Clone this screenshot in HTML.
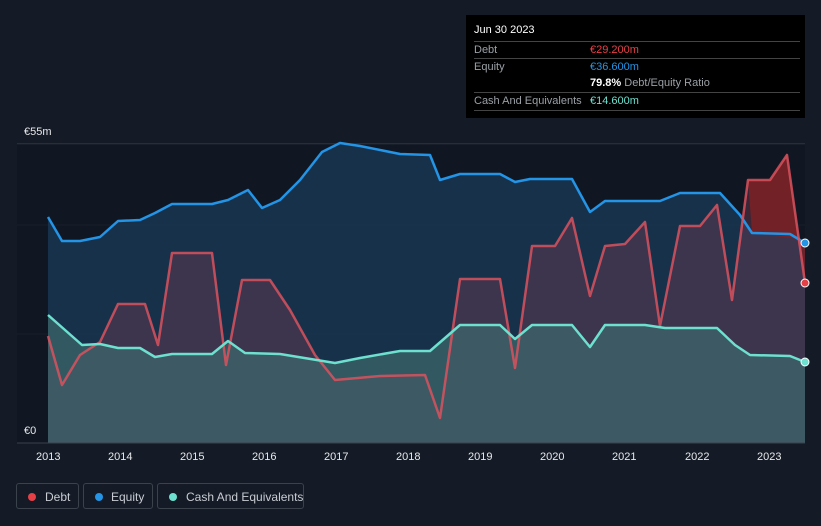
<!DOCTYPE html>
<html><head><style>
body{margin:0;width:821px;height:526px;background:#151b26;font-family:"Liberation Sans",sans-serif;overflow:hidden;position:relative}
.tip{position:absolute;left:466px;top:15px;width:339px;height:103px;background:#000;color:#fff;font-size:11px}
.row{position:absolute;left:8px;width:326px;border-top:1px solid #444;height:17px;line-height:17px;color:#9aa0a6;white-space:nowrap}
.row span{position:absolute;left:116px}
.leg{position:absolute;top:483px;height:26px;border:1px solid #3c424c;border-radius:3px;color:#c8ccd2;font-size:12px;line-height:26px;box-sizing:border-box;white-space:nowrap}
.leg i{position:absolute;left:11px;top:9px;width:8px;height:8px;border-radius:50%}
.ax{position:absolute;top:451px;color:#e6e8ea;font-size:11px}
</style></head><body>
<svg width="821" height="526" style="position:absolute;left:0;top:0">
<line x1="17" y1="144" x2="805" y2="144" stroke="#3a414c"/>
<line x1="17" y1="225" x2="805" y2="225" stroke="#262d38"/>
<line x1="17" y1="334" x2="805" y2="334" stroke="#262d38"/>
<rect x="17" y="144" width="788" height="299" fill="#0f1520" opacity="0.6"/>
<path d="M48,217L62,241L80,241L100,237L118,221L140,220L155,213L172,204L212,204L228,200L238,195L248,190L262,208L280,200L300,180L322,152L340,143L360,146L400,154L430,155L440,180L460,174L500,174L515,182L530,179L572,179L590,212L605,201L660,201L680,193L720,193L740,215L752,233L790,234L805,243L805,443L48,443Z" fill="#1a3450" opacity="0.9"/>
<path d="M48,336L62,385L80,355L100,342L118,304L145,304L158,345L172,253L212,253L226,365L242,280L270,280L290,310L315,355L335,380L380,376L425,375L440,418L460,279L500,279L515,368L532,246L555,246L572,218L590,296L605,246L625,244L645,222L660,326L680,226L700,226L717,205L732,300L748,180L770,180L787,155L805,283L805,443L48,443Z" fill="#6a3a52" opacity="0.45"/>
<path d="M748,180L770,180L787,155L805,283L805,240L752,233Z" fill="#8a2020" opacity="0.7"/>
<path d="M48,315L82,345L100,344L118,348L140,348L155,357L172,354L212,354L228,341L245,353L280,354L335,363L360,358L400,351L430,351L460,325L500,325L515,339L532,325L572,325L590,347L605,325L645,325L665,328L717,328L735,345L750,355L790,356L805,362L805,443L48,443Z" fill="#3d6a6c" opacity="0.7"/>
<path d="M48,217L62,241L80,241L100,237L118,221L140,220L155,213L172,204L212,204L228,200L238,195L248,190L262,208L280,200L300,180L322,152L340,143L360,146L400,154L430,155L440,180L460,174L500,174L515,182L530,179L572,179L590,212L605,201L660,201L680,193L720,193L740,215L752,233L790,234L805,243" fill="none" stroke="#2394e6" stroke-width="2.5" stroke-linejoin="round"/>
<path d="M48,336L62,385L80,355L100,342L118,304L145,304L158,345L172,253L212,253L226,365L242,280L270,280L290,310L315,355L335,380L380,376L425,375L440,418L460,279L500,279L515,368L532,246L555,246L572,218L590,296L605,246L625,244L645,222L660,326L680,226L700,226L717,205L732,300L748,180L770,180L787,155L805,283" fill="none" stroke="#d9525e" stroke-width="2.5" stroke-linejoin="round" opacity="0.85"/>
<path d="M48,315L82,345L100,344L118,348L140,348L155,357L172,354L212,354L228,341L245,353L280,354L335,363L360,358L400,351L430,351L460,325L500,325L515,339L532,325L572,325L590,347L605,325L645,325L665,328L717,328L735,345L750,355L790,356L805,362" fill="none" stroke="#6de0cf" stroke-width="2.5" stroke-linejoin="round"/>
<line x1="17" y1="443" x2="805" y2="443" stroke="#3a414c"/>
<circle cx="805" cy="243" r="4" fill="#2394e6" stroke="#fff"/>
<circle cx="805" cy="283" r="4" fill="#e64047" stroke="#fff"/>
<circle cx="805" cy="362" r="4" fill="#6de0cf" stroke="#fff"/>
</svg>
<div style="position:absolute;left:24px;top:126px;color:#e6e8ea;font-size:11px">€55m</div>
<div style="position:absolute;left:24px;top:425px;color:#e6e8ea;font-size:11px">€0</div>
<div class="ax" style="left:36px">2013</div><div class="ax" style="left:108px">2014</div><div class="ax" style="left:180px">2015</div><div class="ax" style="left:252px">2016</div><div class="ax" style="left:324px">2017</div><div class="ax" style="left:396px">2018</div><div class="ax" style="left:468px">2019</div><div class="ax" style="left:540px">2020</div><div class="ax" style="left:612px">2021</div><div class="ax" style="left:685px">2022</div><div class="ax" style="left:757px">2023</div>
<div class="tip">
<div style="position:absolute;left:8px;top:9px">Jun 30 2023</div>
<div class="row" style="top:26px">Debt<span style="color:#e64047">€29.200m</span></div>
<div class="row" style="top:43px">Equity<span style="color:#2394e6">€36.600m</span></div>
<div class="row" style="top:60px;border:none"><span style="color:#fff;font-weight:bold">79.8% <b style="color:#9aa0a6;font-weight:normal">Debt/Equity Ratio</b></span></div>
<div class="row" style="top:77px;border-bottom:1px solid #444">Cash And Equivalents<span style="color:#6de0cf">€14.600m</span></div>
</div>
<div class="leg" style="left:16px;width:63px"><i style="background:#e64047"></i><span style="position:absolute;left:28px">Debt</span></div>
<div class="leg" style="left:83px;width:70px"><i style="background:#2394e6"></i><span style="position:absolute;left:27px">Equity</span></div>
<div class="leg" style="left:157px;width:147px"><i style="background:#6de0cf"></i><span style="position:absolute;left:28px">Cash And Equivalents</span></div>
</body></html>
